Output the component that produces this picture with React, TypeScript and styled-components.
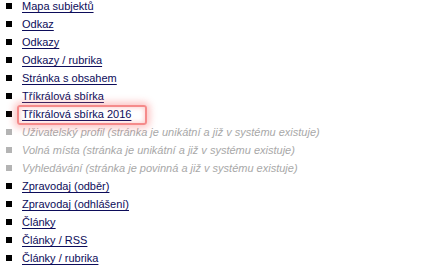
import React from 'react'
import styled, { createGlobalStyle } from 'styled-components'

const Global = createGlobalStyle`
  html, body {
    margin: 0;
    background: #fff;
  }
  body {
    font-family: 'Liberation Sans', 'DejaVu Sans', sans-serif;
    font-size: 11px;
  }
`

const List = styled.ul`
  list-style: none;
  margin: -3px 0 0;
  padding: 0 0 0 6px;
`

const Row = styled.li<{ $disabled?: boolean }>`
  display: flex;
  align-items: center;
  height: 18px;
  gap: 10px;
  color: ${p => (p.$disabled ? '#a8a8a8' : '#0c0c5a')};
  font-style: ${p => (p.$disabled ? 'italic' : 'normal')};
  white-space: nowrap;

  &::before {
    content: '';
    flex: none;
    width: 6px;
    height: 6px;
    background: ${p => (p.$disabled ? '#b4b4b4' : '#000')};
  }
`

const Link = styled.a<{ $marked?: boolean }>`
  color: inherit;
  text-decoration: underline;
  text-underline-offset: 2px;
  cursor: pointer;
  position: relative;

  ${p =>
    p.$marked &&
    `
    &::after {
      content: '';
      position: absolute;
      left: -5px;
      right: -16px;
      top: -3px;
      bottom: -5px;
      border: 2px solid #f58a8a;
      border-radius: 3px;
      box-shadow: 0 0 7px 3px rgba(248, 110, 110, 0.4), inset 0 0 4px 1px rgba(248, 120, 120, 0.35);
      pointer-events: none;
    }
  `}
`

const Note = styled.span``

type Item = { label: string; disabled?: boolean; marked?: boolean }

const items: Item[] = [
  { label: 'Mapa subjektů' },
  { label: 'Odkaz' },
  { label: 'Odkazy' },
  { label: 'Odkazy / rubrika' },
  { label: 'Stránka s obsahem' },
  { label: 'Tříkrálová sbírka' },
  { label: 'Tříkrálová sbírka 2016', marked: true },
  { label: 'Uživatelský profil (stránka je unikátní a již v systému existuje)', disabled: true },
  { label: 'Volná místa (stránka je unikátní a již v systému existuje)', disabled: true },
  { label: 'Vyhledávání (stránka je povinná a již v systému existuje)', disabled: true },
  { label: 'Zpravodaj (odběr)' },
  { label: 'Zpravodaj (odhlášení)' },
  { label: 'Články' },
  { label: 'Články / RSS' },
  { label: 'Články / rubrika' },
]

const App = () => (
  <>
    <Global />
    <List>
      {items.map(item => (
        <Row key={item.label} $disabled={item.disabled}>
          {item.disabled ? (
            <Note>{item.label}</Note>
          ) : (
            <Link $marked={item.marked}>{item.label}</Link>
          )}
        </Row>
      ))}
    </List>
  </>
)

export default App
